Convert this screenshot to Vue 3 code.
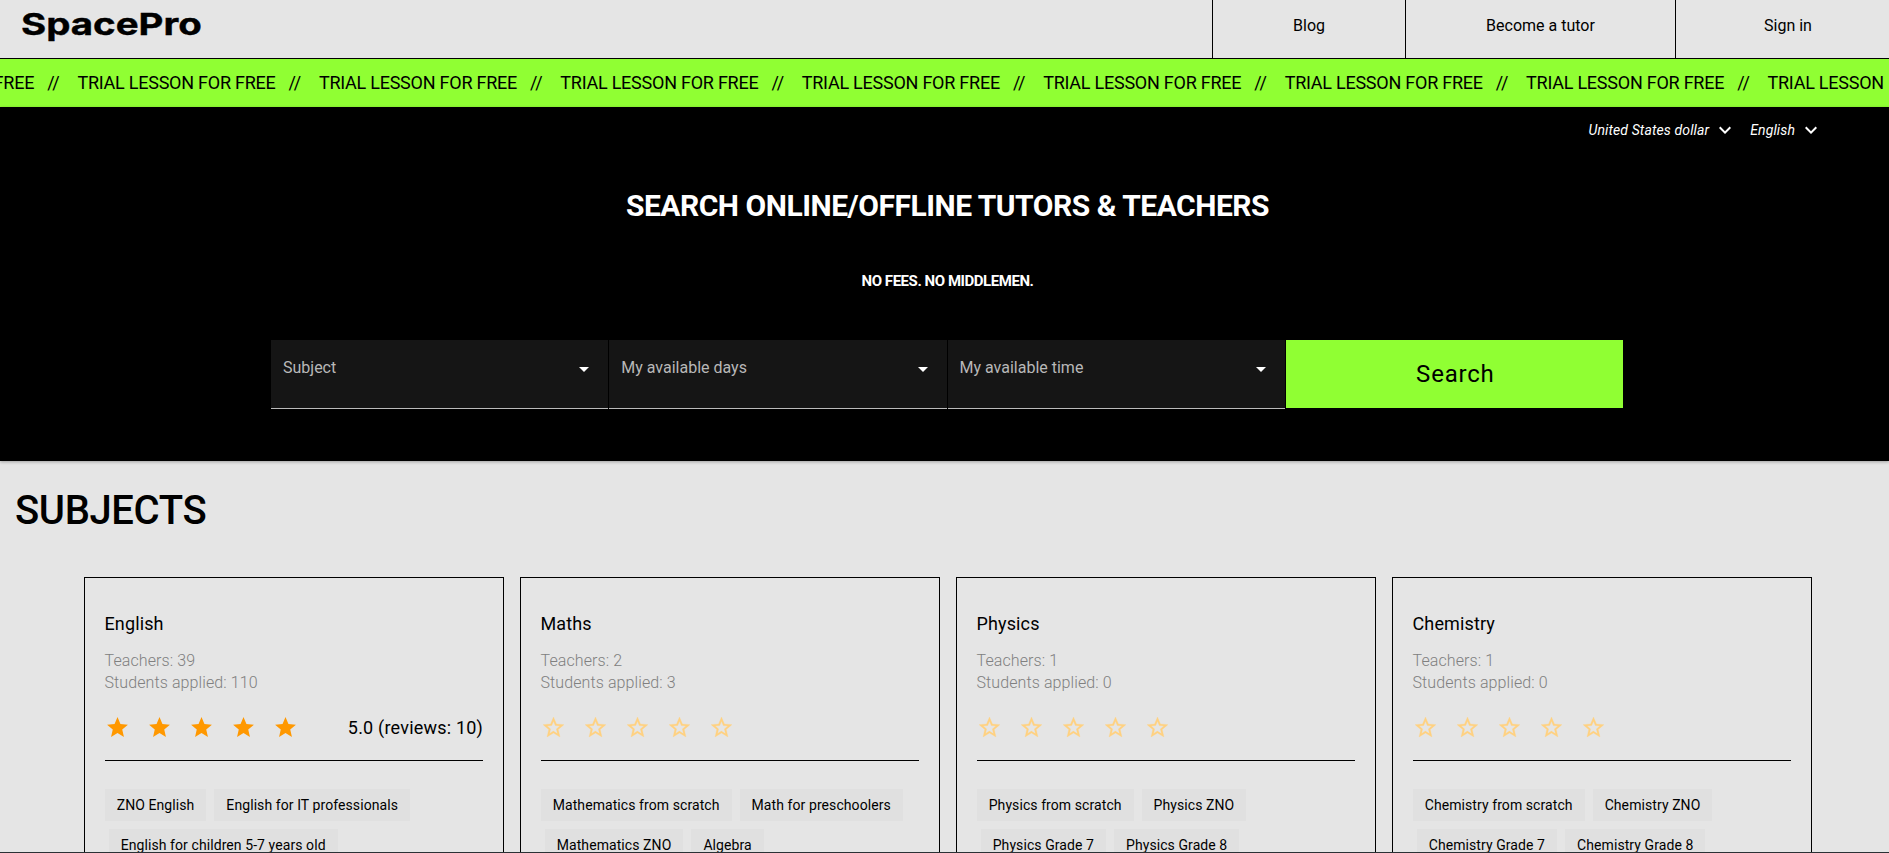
<script setup>
const nav = ['Blog', 'Become a tutor', 'Sign in']
const fields = ['Subject', 'My available days', 'My available time']
const locales = ['United States dollar', 'English']
const subjects = [
  { name: 'English', teachers: 39, students: 110, rating: '5.0', reviews: 10, tags: ['ZNO English', 'English for IT professionals', 'English for children 5-7 years old'] },
  { name: 'Maths', teachers: 2, students: 3, tags: ['Mathematics from scratch', 'Math for preschoolers', 'Mathematics ZNO', 'Algebra'] },
  { name: 'Physics', teachers: 1, students: 0, tags: ['Physics from scratch', 'Physics ZNO', 'Physics Grade 7', 'Physics Grade 8'] },
  { name: 'Chemistry', teachers: 1, students: 0, tags: ['Chemistry from scratch', 'Chemistry ZNO', 'Chemistry Grade 7', 'Chemistry Grade 8'] }
]
const starFull = 'M12,17.27L18.18,21L16.54,13.97L22,9.24L14.81,8.62L12,2L9.19,8.62L2,9.24L7.45,13.97L5.82,21L12,17.27Z'
const starOutline = 'M12,15.39L8.24,17.66L9.23,13.38L5.91,10.5L10.29,10.13L12,6.09L13.71,10.13L18.09,10.5L14.77,13.38L15.76,17.66M22,9.24L14.81,8.63L12,2L9.19,8.63L2,9.24L7.45,13.97L5.82,21L12,17.27L18.18,21L16.54,13.97L22,9.24Z'
</script>

<template>
  <div class="page">
    <header class="header">
      <div class="logo"><span>SpacePro</span></div>
      <nav class="nav">
        <a v-for="item in nav" :key="item">{{ item }}</a>
      </nav>
    </header>

    <div class="ticker">
      <div class="track">
        <div v-for="n in 9" :key="n" class="tick"><span>TRIAL LESSON FOR FREE</span><span>//</span></div>
      </div>
    </div>

    <section class="hero">
      <div class="locales">
        <div v-for="l in locales" :key="l" class="locale">
          <span>{{ l }}</span>
          <svg viewBox="0 0 24 24"><path d="M7.41,8.58L12,13.17L16.59,8.58L18,10L12,16L6,10L7.41,8.58Z" /></svg>
        </div>
      </div>
      <h1>SEARCH ONLINE/OFFLINE TUTORS &amp; TEACHERS</h1>
      <h2>NO FEES. NO MIDDLEMEN.</h2>
      <div class="search">
        <div v-for="f in fields" :key="f" class="field">
          <span>{{ f }}</span>
          <svg viewBox="0 0 24 24"><path d="M7,10L12,15L17,10H7Z" /></svg>
        </div>
        <button class="submit">Search</button>
      </div>
    </section>

    <h3 class="heading">SUBJECTS</h3>
    <div class="cards">
      <article v-for="s in subjects" :key="s.name" class="card">
        <div class="name">{{ s.name }}</div>
        <div class="meta">Teachers: {{ s.teachers }}<br>Students applied: {{ s.students }}</div>
        <div class="rating">
          <div class="stars" :class="{ empty: !s.rating }">
            <svg v-for="n in 5" :key="n" viewBox="0 0 24 24"><path :d="s.rating ? starFull : starOutline" /></svg>
          </div>
          <div v-if="s.rating" class="reviews">{{ s.rating }} (reviews: {{ s.reviews }})</div>
        </div>
        <div class="tags">
          <span v-for="t in s.tags" :key="t" class="tag">{{ t }}</span>
        </div>
      </article>
    </div>
  </div>
</template>

<style>
html, body { margin: 0; overflow: hidden; }
</style>

<style scoped>
* { box-sizing: border-box; }
.page { height: 853px; overflow: hidden; display: flex; flex-direction: column; background: #e5e5e5; border-bottom: 1px solid #2b3135; font-family: Roboto, "Liberation Sans", sans-serif; color: #000; }
.header { height: 59px; flex: none; display: flex; justify-content: space-between; border-bottom: 1px solid #000; }
.logo { padding-left: 21px; font: 700 30.5px/48px Inter, "DejaVu Sans", sans-serif; }
.logo span { display: inline-block; transform: scaleX(1.26); transform-origin: 0 50%; -webkit-text-stroke: .4px #000; }
.nav { display: flex; width: 677px; }
.nav a { flex: none; width: 193px; border-left: 1px solid #000; font-size: 16px; line-height: 52px; text-align: center; }
.nav a:nth-child(2) { width: 270px; }
.nav a:nth-child(3) { width: 225px; }
.ticker { height: 48px; flex: none; overflow: hidden; background: #90ff33; }
.track { display: flex; margin-left: -164px; }
.tick { flex: none; width: 241.45px; display: flex; gap: 13px; font-size: 18px; line-height: 48px; letter-spacing: -.24px; white-space: nowrap; }
.hero { height: 354px; flex: none; background: #000; color: #fff; box-shadow: 0 1px 3px rgba(0, 0, 0, .3); padding-left: 6px; }
.locales { display: flex; justify-content: flex-end; gap: 13px; height: 46px; padding-right: 66px; }
.locale { display: flex; align-items: center; gap: 4px; font-size: 14px; font-style: italic; letter-spacing: .12px; }
.locale svg { width: 24px; height: 24px; fill: #fff; }
h1 { margin: 33px 0 0; font-size: 30px; line-height: 40px; font-weight: 700; letter-spacing: -.48px; text-align: center; }
h2 { margin: 45px 0 0; font-size: 15px; line-height: 20px; font-weight: 700; letter-spacing: -.45px; text-align: center; }
.search { display: grid; grid-template-columns: repeat(4, 337.25px); column-gap: 1px; margin: 49px 0 0 265px; }
.field { height: 69px; display: flex; justify-content: space-between; padding: 17px 12px 0; background: #151515; border-bottom: 1px solid #bbb; color: #b8b8b8; font-size: 16px; line-height: 22px; }
.field svg { width: 24px; height: 24px; fill: #fff; }
.submit { height: 68px; border: 0; padding: 0 0 0 2px; background: #90ff33; color: #000; font: 400 24px Roboto, sans-serif; letter-spacing: .8px; }
.heading { margin: 26px 0 0 15px; flex: none; font-size: 40px; line-height: 48px; font-weight: 500; letter-spacing: -.38px; }
.cards { flex: 1; min-height: 0; display: grid; grid-template-columns: repeat(4, 420px); gap: 16px; margin: 42px 0 0 84px; }
.card { height: 400px; border: 1px solid #000; padding: 33px 20px 0; }
.name { margin-left: -.5px; font-size: 18px; line-height: 26px; letter-spacing: .13px; }
.meta { margin: 13px 0 0 -.5px; font-size: 16px; line-height: 22px; font-weight: 300; letter-spacing: .1px; color: #808080; }
.rating { margin-top: 10px; height: 57px; padding-bottom: 9px; border-bottom: 1px solid #000; display: flex; align-items: center; justify-content: space-between; }
.stars { display: flex; gap: 17px; margin-left: -.4px; }
.stars svg { width: 25px; height: 25px; fill: #ff9800; }
.stars.empty svg { fill: #ffd180; stroke: #ffd180; stroke-width: .3; }
.reviews { font-size: 18px; letter-spacing: .2px; }
.tags { display: flex; flex-wrap: wrap; margin: 24px 0 0 -.3px; }
.tag { height: 32px; margin: 4px; padding: 0 12px; background: #e0e0e0; font-size: 14px; line-height: 32px; letter-spacing: .08px; }
.tag:first-child { margin-left: 0; }
</style>
